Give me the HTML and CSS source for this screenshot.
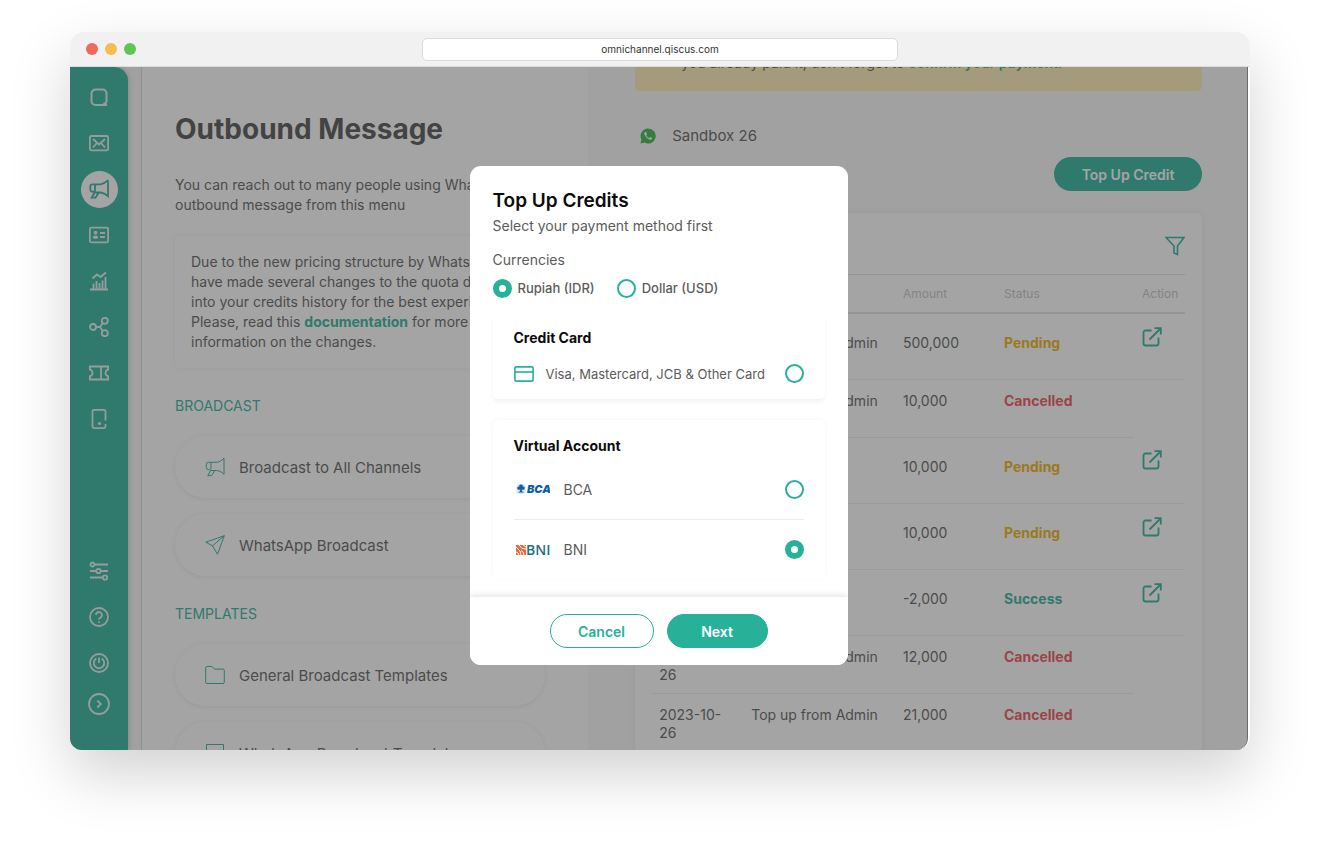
FILE: index.html
```html
<!DOCTYPE html>
<html lang="en">
<head>
<meta charset="utf-8">
<meta name="viewport" content="width=device-width, initial-scale=1">
<title>Outbound Message</title>
<link rel="stylesheet" href="styles.css">
</head>
<body>
<svg class="sprite" aria-hidden="true">
  <symbol id="i-open" viewBox="0 0 20 20"><path d="M9.500 3.500H3.500a2 2 0 0 0-2 2v11a2 2 0 0 0 2 2h11a2 2 0 0 0 2-2v-6M7.500 12.500 18 2M12.500 1.200H18.800V7.500"/></symbol>
  <symbol id="i-horn" viewBox="0 0 20 20"><path d="M19 1.200v16c-2.500-2.300-4.500-3.400-7.500-3.700H5.500M19 1.200c-2.500 2.500-4.500 3.800-7.500 4.100H3.500A2.200 2.200 0 0 0 1.300 7.500v3a2.200 2.200 0 0 0 2.200 2.200h1A1.500 1.500 0 0 0 6 11.200V5.300M5.500 13.500 2.800 18.700h3.700l3.300-5.200"/></symbol>
</svg>
<div class="window">
  <header class="chrome">
    <div class="dots"><span class="dot red"></span><span class="dot yellow"></span><span class="dot green"></span></div>
    <input class="address" type="text" value="omnichannel.qiscus.com" aria-label="Address" readonly>
  </header>
  <div class="viewport">
    <nav class="sidebar" aria-label="Main">
      <a href="#" class="nav" aria-label="Home"><svg viewBox="0 0 20 20"><path d="M17.800 18H6.500A4 4 0 0 1 2.500 14V6.500A4 4 0 0 1 6.500 2.500h7A4 4 0 0 1 17.500 6.500V14c0 1.500-.3 2-1.500 2.500M14.500 16l3.300 2" stroke-width="2"/></svg></a>
      <a href="#" class="nav" aria-label="Inbox"><svg viewBox="0 0 20 20"><rect x="0.900" y="3" width="18.200" height="14.400" rx="1.500"/><path d="M4 6l6 5.500L16 6M4 14.500l3.500-4M16 14.500l-3.500-4"/></svg></a>
      <a href="#" class="nav" aria-label="Outbound"><span class="active"><svg viewBox="0 0 20 20"><use href="#i-horn"/></svg></span></a>
      <a href="#" class="nav" aria-label="Contacts"><svg viewBox="0 0 20 20"><rect x="0.900" y="2.600" width="18.200" height="14.800" rx="1.500"/><path d="M11 8h5M11 12h5"/><circle class="fill" cx="6.500" cy="7.700" r="1.900"/><ellipse class="fill" cx="6.500" cy="12.200" rx="2.800" ry="1.800"/></svg></a>
      <a href="#" class="nav" aria-label="Analytics"><svg viewBox="0 0 20 20"><path d="M1 18.500h18M4.500 18v-5.500M7.500 18v-8M10.500 18v-6M13.500 18V9.500M16.500 18V6M3.500 7.500l4.500-4 3.500 2.500L17 1.500"/></svg></a>
      <a href="#" class="nav" aria-label="Integrations"><svg viewBox="0 0 20 20"><circle cx="4" cy="10" r="3"/><circle cx="15.800" cy="3.800" r="3"/><circle cx="15.800" cy="16.200" r="3"/><path d="M7 10h4l2.800-4M11 10l2.800 4"/></svg></a>
      <a href="#" class="nav" aria-label="Tickets"><svg viewBox="0 0 20 20"><path d="M.9 3.500h18.200v3.200a3.400 3.400 0 0 0 0 6.600v3.200H.9v-3.200a3.400 3.400 0 0 0 0-6.600zM12 3.500v13"/></svg></a>
      <a href="#" class="nav" aria-label="Devices"><svg viewBox="0 0 20 20"><path d="M16.500 11.500V2.400a1.500 1.500 0 0 0-1.500-1.500H5a1.500 1.500 0 0 0-1.500 1.500v15.200A1.500 1.500 0 0 0 5 19.100h10a1.500 1.500 0 0 0 1.500-1.500V15"/><circle class="fill" cx="10.500" cy="14.500" r="1.600"/></svg></a>
      <span class="spacer"></span>
      <a href="#" class="nav" aria-label="Settings"><svg viewBox="0 0 20 20"><path d="M5.500 3.500H19M1 10h6M12 10h7M1 16.500h13M18 16.500h1"/><circle cx="3.500" cy="3.500" r="2"/><circle cx="9.500" cy="10" r="2.200"/><circle cx="16" cy="16.500" r="2.200"/></svg></a>
      <a href="#" class="nav" aria-label="Help"><svg viewBox="0 0 20 20"><circle cx="10" cy="10" r="9"/><path d="M7 8a3 3 0 1 1 4.500 2.600C10.500 11.200 10 11.700 10 12.500M10 14.300v1.500"/></svg></a>
      <a href="#" class="nav" aria-label="Log out"><svg viewBox="0 0 20 20"><circle cx="10" cy="10" r="9"/><path d="M7.300 5.600a5.200 5.200 0 1 0 5.400 0M10 4.500v5.500"/></svg></a>
      <a href="#" class="nav expand" aria-label="Expand"><svg viewBox="0 0 22 22"><circle cx="11" cy="11" r="10"/><path d="M9.300 7.500l3.500 3.500-3.500 3.500"/></svg></a>
    </nav>
    <main class="page">
      <section class="outbound">
        <h1>Outbound Message</h1>
        <p class="intro">You can reach out to many people using WhatsApp outbound message from this menu</p>
        <p class="notice">Due to the new pricing structure by WhatsApp, we<br>have made several changes to the quota details<br>into your credits history for the best experience.<br>Please, read this <a href="#">documentation</a> for more<br>information on the changes.</p>
        <h2>BROADCAST</h2>
        <div class="tiles">
          <button class="tile"><svg viewBox="0 0 20 20"><use href="#i-horn"/></svg>Broadcast to All Channels</button>
          <button class="tile"><svg viewBox="0 0 20 20"><path d="M19.300.7.800 7.200l6.700 3.600 5 8.500zM19.300.7 7.500 10.800"/></svg>WhatsApp Broadcast</button>
        </div>
        <h2>TEMPLATES</h2>
        <div class="tiles">
          <button class="tile"><svg viewBox="0 0 20 20"><path d="M.7 2.800A1.300 1.300 0 0 1 2 1.500h5l2.500 2.600H18a1.300 1.300 0 0 1 1.300 1.300v11.800a1.300 1.300 0 0 1-1.300 1.300H2a1.300 1.300 0 0 1-1.300-1.300z"/></svg>General Broadcast Templates</button>
          <button class="tile"><svg viewBox="0 0 20 20"><path d="M1.500 1.500h17v13h-11l-6 4z"/></svg>WhatsApp Broadcast Templates</button>
        </div>
      </section>
      <section class="credits">
        <p class="banner">you already paid it, don’t forget to <a href="#">confirm your payment</a>.</p>
        <p class="channel"><svg viewBox="0 0 16 16" aria-hidden="true"><path d="M8 .5a7.500 7.500 0 0 0-6.600 11L.5 15.500l4-1A7.500 7.500 0 1 0 8 .5z" fill="#31b545"/><path d="M5 4c-1 .7-1 2.300.5 4.300S9 11.800 10.500 11.700c1-.1 1.600-.7 1.600-1.700l-1.900-1-1 1C8 9.600 6.800 8.500 6.300 7.200l.8-.9L6.200 4z" fill="#fff"/></svg>Sandbox 26</p>
        <button class="topup">Top Up Credit</button>
        <div class="history">
          <div class="tools"><button class="filter" aria-label="Filter"><svg viewBox="0 0 20 20"><path d="M1 1.500h18l-6.500 8.500v8.500l-3.500-1.500V10z"/></svg></button></div>
          <table>
            <colgroup><col class="c-date"><col><col class="c-amount"><col class="c-status"><col class="c-action"></colgroup>
            <thead><tr><th>Date</th><th>Description</th><th>Amount</th><th>Status</th><th>Action</th></tr></thead>
            <tbody>
              <tr class="linked"><td>2023-10-26</td><td>Top up from Admin</td><td>500,000</td><td class="pending">Pending</td><td><a href="#" aria-label="Open"><svg><use href="#i-open"/></svg></a></td></tr>
              <tr><td>2023-10-26</td><td>Top up from Admin</td><td>10,000</td><td class="cancelled">Cancelled</td><td></td></tr>
              <tr class="linked"><td>2023-10-26</td><td>Top up promo</td><td>10,000</td><td class="pending">Pending</td><td><a href="#" aria-label="Open"><svg><use href="#i-open"/></svg></a></td></tr>
              <tr class="linked"><td>2023-10-26</td><td>Top up promo</td><td>10,000</td><td class="pending">Pending</td><td><a href="#" aria-label="Open"><svg><use href="#i-open"/></svg></a></td></tr>
              <tr class="linked"><td>2023-10-26</td><td>Top up promo</td><td>-2,000</td><td class="success">Success</td><td><a href="#" aria-label="Open"><svg><use href="#i-open"/></svg></a></td></tr>
              <tr><td>2023-10-26</td><td>Top up from Admin</td><td>12,000</td><td class="cancelled">Cancelled</td><td></td></tr>
              <tr><td>2023-10-26</td><td>Top up from Admin</td><td>21,000</td><td class="cancelled">Cancelled</td><td></td></tr>
            </tbody>
          </table>
        </div>
      </section>
    </main>
    <div class="scrim">
      <form class="dialog" role="dialog" aria-labelledby="dialog-title">
        <div class="dialog-body">
          <h2 id="dialog-title">Top Up Credits</h2>
          <p class="sub">Select your payment method first</p>
          <p class="legend">Currencies</p>
          <div class="currencies">
            <label><input type="radio" name="currency" checked>Rupiah (IDR)</label>
            <label><input type="radio" name="currency">Dollar (USD)</label>
          </div>
          <div class="methods">
            <section class="method">
              <h3>Credit Card</h3>
              <label class="option card"><svg viewBox="0 0 20 16"><rect x="0.900" y="0.900" width="18.200" height="14.200" rx="1"/><path d="M1 6h18"/></svg><span>Visa, Mastercard, JCB &amp; Other Card</span><input type="radio" name="method"></label>
            </section>
            <section class="method virtual">
              <h3>Virtual Account</h3>
              <label class="option bank"><svg class="logo" viewBox="0 0 34 14" aria-hidden="true"><rect x="0.500" y="2" width="9" height="10" rx="3" fill="#d5e4f2"/><path d="M5 2.500c1.400 0 2 .9 1.700 2C8 4.300 9 5.200 8.700 6.400c-.2 1.100-1.500 1.600-2.900 1.100L6 9.300l2 1.200H2l2-1.200.2-1.800c-1.400.5-2.700 0-2.900-1.100C1 5.200 2 4.300 3.300 4.500c-.3-1.100.3-2 1.700-2z" fill="#0f5fa8"/><text x="11" y="11" class="bca">BCA</text></svg><span>BCA</span><input type="radio" name="method"></label>
              <label class="option bank"><svg class="logo" viewBox="0 0 34 14" aria-hidden="true"><rect x="0" y="2" width="10" height="10" fill="#e8693c"/><path d="M0 4l4 4 1 4M3 2l3 3.500L10 6M5 7.500l2 1.500 1 3M0 9l2 1 1 2M7 2l3 2" fill="none" stroke="#fff"/><text x="10" y="12" class="bni">BNI</text></svg><span>BNI</span><input type="radio" name="method" checked></label>
            </section>
          </div>
        </div>
        <footer class="actions">
          <button type="button" class="cancel">Cancel</button>
          <button type="button" class="next">Next</button>
        </footer>
      </form>
    </div>
  </div>
</div>
</body>
</html>
```
FILE: styles.css
```css
:root {
  --teal: #27b199;
  --text: #5c5c5c;
  --line: #ececec;
}
* { box-sizing: border-box; }
body {
  margin: 0;
  padding: 32px 70px 108px;
  background: #fff;
  color: var(--text);
  font-family: Inter, "Liberation Sans", sans-serif;
  font-size: 14px;
}
h1, h2, h3, p { margin: 0; }
a { color: var(--teal); text-decoration: none; }
button { font: inherit; cursor: pointer; }
svg { fill: none; stroke: currentColor; }
.sprite { position: absolute; width: 0; height: 0; }

.window {
  display: flex;
  flex-direction: column;
  height: calc(100vh - 141px);
  min-height: 600px;
  border-radius: 14px;
  box-shadow: 0 24px 60px rgba(0, 0, 0, .18);
}
.chrome {
  display: grid;
  grid-template-columns: 1fr minmax(200px, 476px) 1fr;
  align-items: center;
  height: 35px;
  flex: none;
  padding: 0 16px;
  border-bottom: 1px solid #dcdcdc;
  border-radius: 14px 14px 0 0;
  background: #f1f1f1;
}
.dots { display: flex; gap: 7px; }
.dot { width: 12px; height: 12px; border-radius: 50%; }
.red { background: #ee6a5f; }
.yellow { background: #f5bd4f; }
.green { background: #61c554; }
.address {
  height: 23px;
  width: 100%;
  border: 1px solid #dcdcdc;
  border-radius: 5px;
  background: #fff;
  color: #333;
  font: 10px Inter, sans-serif;
  text-align: center;
  padding: 0;
}

.viewport {
  position: relative;
  display: flex;
  flex: 1;
  min-height: 0;
  margin-right: 2px;
  overflow: hidden;
  border-radius: 0 0 12px 12px;
  border-right: 1px solid #6c6c6c;
  background: #f9f9f9;
}
.sidebar {
  display: flex;
  flex-direction: column;
  flex: none;
  width: 58px;
  padding: 7px 0 28px;
  border-radius: 0 14px 0 0;
  background: var(--teal);
  box-shadow: 1px 0 5px rgba(0, 0, 0, .18);
}
.nav {
  display: flex;
  align-items: center;
  justify-content: center;
  height: 46px;
  color: #dff3ef;
}
.nav svg { width: 20px; height: 20px; stroke-width: 1.8; }
.nav .fill { fill: currentColor; stroke: none; }
.nav.expand { height: 36px; }
.nav.expand svg { width: 22px; height: 22px; }
.active {
  display: flex;
  align-items: center;
  justify-content: center;
  width: 37px;
  height: 37px;
  border-radius: 50%;
  background: #fff;
  color: var(--teal);
}
.spacer { flex: 1; }

.page {
  display: grid;
  grid-template-columns: 447fr 660fr;
  flex: 1;
  min-width: 0;
  margin-left: 13px;
  border-left: 1px solid #ddd;
}
.outbound { padding: 44px 43px 0 33px; background: #fff; }
h1 { font-size: 28px; line-height: 36px; font-weight: 700; color: #4c4c4c; }
.intro { margin-top: 28px; line-height: 20px; }
.notice {
  margin-top: 21px;
  padding: 16px;
  border-radius: 5px;
  line-height: 20px;
  white-space: nowrap;
  box-shadow: 0 0 6px rgba(0, 0, 0, .08);
}
.notice a { font-weight: 700; }
.outbound h2 {
  margin: 28px 0 20px;
  color: var(--teal);
  font-size: 14px;
  line-height: 20px;
  font-weight: 400;
}
.tiles { display: grid; gap: 16px; }
.tile {
  display: flex;
  align-items: center;
  gap: 14px;
  height: 62px;
  padding: 0 30px;
  border: 0;
  border-radius: 31px;
  background: #fff;
  color: var(--text);
  font-size: 15px;
  white-space: nowrap;
  box-shadow: 0 1px 5px rgba(0, 0, 0, .09);
}
.tile svg { flex: none; width: 20px; height: 20px; color: var(--teal); }

.credits { padding: 0 45px 0 47px; }
.banner {
  margin-top: -32px;
  padding: 18px 46px;
  border-radius: 5px;
  background: #ffefb3;
  line-height: 20px;
}
.banner a { font-weight: 600; }
.channel {
  display: flex;
  align-items: center;
  gap: 16px;
  margin-top: 33px;
  padding-left: 5px;
  font-size: 15px;
  line-height: 24px;
}
.channel svg { width: 16px; height: 16px; stroke: none; }
.topup {
  display: block;
  width: 148px;
  height: 34px;
  margin: 9px 0 22px auto;
  border: 0;
  border-radius: 17px;
  background: var(--teal);
  color: #fff;
  font-weight: 600;
}
.history {
  padding: 0 17px 0 16px;
  border-radius: 5px;
  background: #fff;
  box-shadow: 0 0 6px rgba(0, 0, 0, .07);
}
.tools { display: flex; justify-content: flex-end; height: 61px; padding-top: 23px; }
.filter { width: 20px; height: 20px; padding: 0; border: 0; background: none; color: var(--teal); }
.filter svg { display: block; width: 20px; height: 20px; stroke-width: 1.6; }
table { width: 100%; border-collapse: collapse; table-layout: fixed; border-top: 1px solid #dedede; }
.c-date { width: 92px; }
.c-amount { width: 101px; }
.c-status { width: 138px; }
.c-action { width: 51px; }
th {
  height: 38px;
  padding: 0 0 0 8px;
  border-bottom: 2px solid #e2e2e2;
  color: #c4c4c4;
  font-size: 12px;
  font-weight: 400;
  text-align: left;
}
td {
  height: 58px;
  padding: 12px 0 9px 8px;
  border-bottom: 1px solid var(--line);
  line-height: 18px;
  vertical-align: top;
}
td:first-child { padding-right: 16px; }
.linked td { height: 66px; padding-top: 20px; }
.linked td:last-child { padding: 13px 0 0 8px; }
td:empty { border-bottom: 0; }
td a, td svg { display: block; width: 20px; height: 20px; stroke-width: 1.8; }
.pending, .cancelled, .success { font-weight: 700; }
.pending { color: #efb008; }
.cancelled { color: #ee4f56; }
.success { color: var(--teal); }

.scrim {
  position: absolute;
  inset: 0;
  display: flex;
  align-items: flex-start;
  justify-content: center;
  padding-top: 99px;
  background: rgba(56, 56, 56, .46);
}
.dialog { width: 378px; border-radius: 11px; background: #fff; overflow: hidden; }
.dialog-body { padding: 23px 23px 0; }
.dialog h2 { font-size: 19px; line-height: 24px; font-weight: 600; color: #0c0c0c; }
.sub { margin-top: 3px; line-height: 20px; }
.legend { margin-top: 14px; line-height: 20px; }
.currencies { display: flex; gap: 22px; margin-top: 8px; font-size: 13px; font-weight: 500; }
.currencies label { display: flex; align-items: center; gap: 6px; height: 20px; }
input[type="radio"] {
  appearance: none;
  flex: none;
  width: 19px;
  height: 19px;
  margin: 0;
  border: 2px solid var(--teal);
  border-radius: 50%;
  background: #fff;
}
input[type="radio"]:checked { border-width: 6px; }
.methods { display: grid; gap: 21px; margin-top: 18px; }
.method {
  padding: 12px 21px 0;
  border-radius: 5px;
  box-shadow: 0 3px 4px rgba(0, 0, 0, .05);
}
.method.virtual { padding-top: 16px; box-shadow: 0 -1px 4px rgba(0, 0, 0, .04); }
.method h3 { font-size: 14px; line-height: 20px; font-weight: 700; color: #0c0c0c; }
.option { display: flex; align-items: center; }
.option span { flex: 1; }
.card { height: 51px; font-size: 13px; }
.card svg { width: 20px; height: 16px; margin-right: 12px; color: var(--teal); stroke-width: 1.6; }
.method .bank { height: 60px; }
.logo { width: 34px; height: 14px; margin: 0 14px 0 2px; stroke: none; }
.bank + .bank { border-top: 1px solid var(--line); }
.method h3 + .bank { margin-top: 3px; }
.bca { fill: #0f5fa8; font: italic 900 11px Inter, sans-serif; }
.bni { fill: #1f6f80; font: 600 14px "Open Sans", sans-serif; }
.actions {
  position: relative;
  display: flex;
  justify-content: center;
  gap: 13px;
  margin-top: 18px;
  padding: 17px 0;
  background: #fff;
  box-shadow: 0 -2px 6px rgba(0, 0, 0, .1);
}
.actions button { height: 34px; padding: 0; border: 1px solid var(--teal); border-radius: 17px; font-weight: 600; }
.cancel { width: 104px; background: #fff; color: var(--teal); }
.next { width: 101px; background: var(--teal); color: #fff; }
```
